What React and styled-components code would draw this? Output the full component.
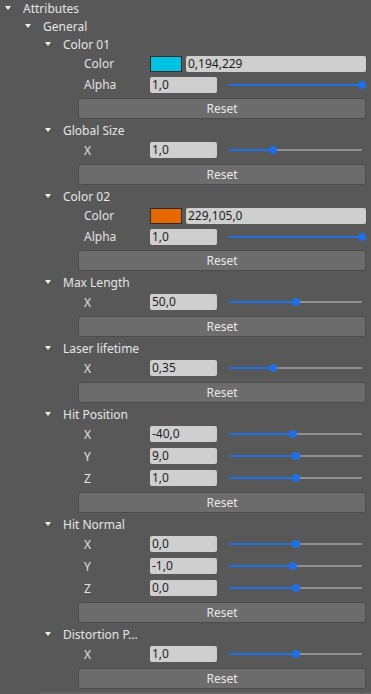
import React from 'react'
import styled, { createGlobalStyle } from 'styled-components'

const GlobalStyle = createGlobalStyle`
  html, body {
    margin: 0;
    padding: 0;
    background: #585858;
  }
  body {
    font-family: "Noto Sans", "Open Sans", sans-serif;
    font-size: 12px;
    color: #e4e4e4;
    overflow: hidden;
  }
`

const sections = [
  { title: 'Color 01', color: '#00c2e5', value: '0,194,229', alpha: '1,0' },
  { title: 'Global Size', rows: [{ label: 'X', value: '1,0', pct: 0.33 }] },
  { title: 'Color 02', color: '#e56900', value: '229,105,0', alpha: '1,0' },
  { title: 'Max Length', rows: [{ label: 'X', value: '50,0', pct: 0.5 }] },
  { title: 'Laser lifetime', rows: [{ label: 'X', value: '0,35', pct: 0.33 }] },
  {
    title: 'Hit Position',
    rows: [
      { label: 'X', value: '-40,0', pct: 0.48 },
      { label: 'Y', value: '9,0', pct: 0.5 },
      { label: 'Z', value: '1,0', pct: 0.5 },
    ],
  },
  {
    title: 'Hit Normal',
    rows: [
      { label: 'X', value: '0,0', pct: 0.5 },
      { label: 'Y', value: '-1,0', pct: 0.48 },
      { label: 'Z', value: '0,0', pct: 0.5 },
    ],
  },
  { title: 'Distortion P...', rows: [{ label: 'X', value: '1,0', pct: 0.5 }] },
]

const App = () => {
  return (
    <Panel>
      <GlobalStyle />
      <Header level={0}>
        <Arrow />
        Attributes
      </Header>
      <Header level={1}>
        <Arrow />
        General
      </Header>
      {sections.map((s) => (
        <Section key={s.title}>
          <Header level={2}>
            <Arrow />
            {s.title}
          </Header>
          {s.color ? (
            <>
              <Row small>
                <Label>Color</Label>
                <Swatch fill={s.color} />
                <Field wide>{s.value}</Field>
              </Row>
              <Row small>
                <Label>Alpha</Label>
                <Field>{s.alpha}</Field>
                <Slider>
                  <Track />
                  <Fill style={{ width: '100%' }} />
                  <Knob style={{ left: '100%' }} />
                </Slider>
              </Row>
            </>
          ) : (
            s.rows.map((r) => (
              <Row key={r.label}>
                <Label>{r.label}</Label>
                <Field>{r.value}</Field>
                <Slider>
                  <Track />
                  <Fill style={{ width: `${r.pct * 100}%` }} />
                  <Knob style={{ left: `${r.pct * 100}%` }} />
                </Slider>
              </Row>
            ))
          )}
          <ResetButton>Reset</ResetButton>
        </Section>
      ))}
      <NextItem />
    </Panel>
  )
}

export default App

const Panel = styled.div`
  width: 371px;
  height: 694px;
  overflow: hidden;
`

const Header = styled.div`
  height: 18px;
  display: flex;
  align-items: center;
  padding-left: ${({ level }) => 5 + level * 20}px;
  color: #e6e6e6;
  white-space: nowrap;
  margin-top: -1px;
  margin-bottom: 1px;
`

const Arrow = styled.span`
  width: 0;
  height: 0;
  border-left: 3.5px solid transparent;
  border-right: 3.5px solid transparent;
  border-top: 4px solid #eeeeee;
  margin-right: 12px;
`

const Section = styled.div`
  display: flex;
  flex-direction: column;
  margin-bottom: 3px;
`

const Row = styled.div`
  height: ${({ small }) => (small ? 21 : 22)}px;
  flex-shrink: 0;
  display: flex;
  align-items: center;
  padding-left: 84px;
  padding-bottom: 2px;
  box-sizing: border-box;
`

const Label = styled.span`
  width: 66px;
  color: #e2e2e2;
`

const Field = styled.div`
  width: ${({ wide }) => (wide ? 180 : 67)}px;
  height: 16px;
  box-sizing: border-box;
  background: #cfcfcf;
  border-radius: 2px;
  color: #1e1e1e;
  padding-left: 2px;
  line-height: 16px;
  font-size: 12px;
`

const Swatch = styled.div`
  width: 32px;
  height: 16px;
  box-sizing: border-box;
  background: ${({ fill }) => fill};
  border: 1px solid #2c2c2c;
  margin-right: 4px;
`

const Slider = styled.div`
  position: relative;
  width: 133px;
  height: 10px;
  margin-left: 12px;
`

const Track = styled.div`
  position: absolute;
  left: 0;
  right: 0;
  top: 4px;
  height: 2px;
  background: #8e8e8e;
`

const Fill = styled.div`
  position: absolute;
  left: 0;
  top: 4px;
  height: 2px;
  background: #1f6fe6;
`

const Knob = styled.div`
  position: absolute;
  top: 1px;
  width: 8px;
  height: 8px;
  margin-left: -4px;
  border-radius: 50%;
  background: #1f6fe6;
`

const ResetButton = styled.div`
  margin: 2px 0 0 78px;
  width: 288px;
  height: 21px;
  flex-shrink: 0;
  box-sizing: border-box;
  background: #6c6c6c;
  border: 1px solid #4c4c4c;
  border-radius: 3px;
  color: #e8e8e8;
  display: flex;
  align-items: center;
  justify-content: center;
`

const NextItem = styled.div`
  margin-left: 40px;
  height: 4px;
  background: #646464;
`
